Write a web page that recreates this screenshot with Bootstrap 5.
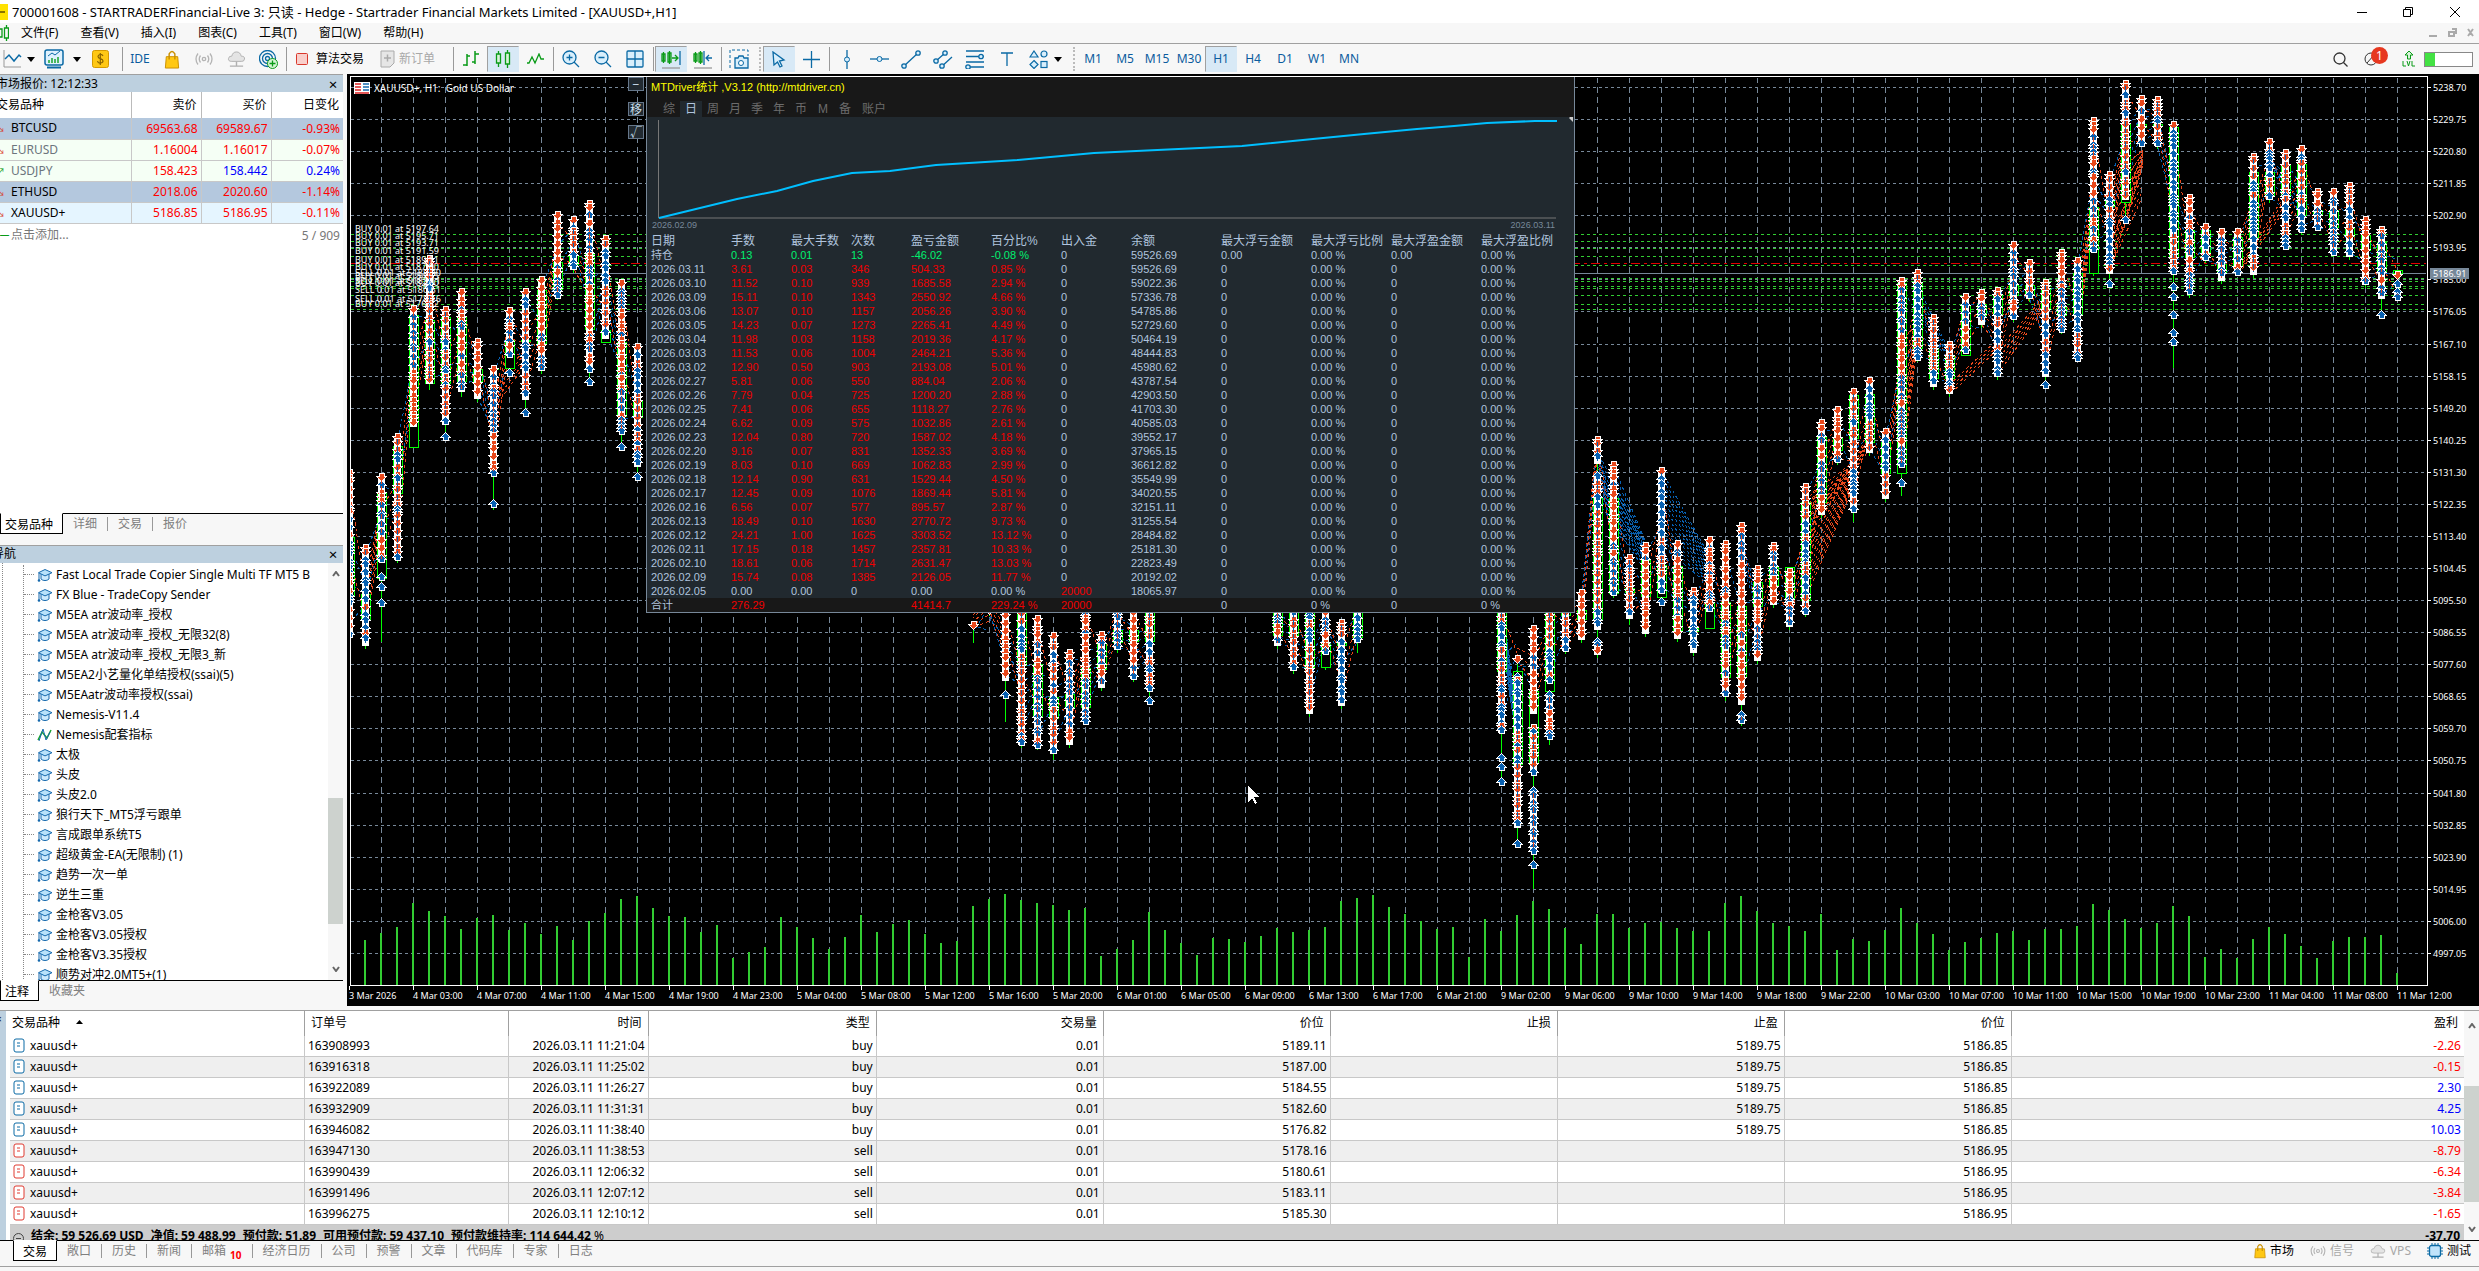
<!DOCTYPE html>
<html lang="zh-CN">
<head>
<meta charset="utf-8">
<meta name="viewport" content="width=device-width, initial-scale=1">
<title>XAUUSD+,H1</title>
<link rel="stylesheet" href="https://cdn.jsdelivr.net/npm/bootstrap@5.3.0/dist/css/bootstrap.min.css">
<script src="https://cdn.jsdelivr.net/npm/bootstrap@5.3.0/dist/js/bootstrap.bundle.min.js"></script>
<style>
:root{--ui:#f7f7f7;--ln:#a0a0a0;--hd:#bdd0df;--steel:#778899}
body{font:12px/16px "Noto Sans","Noto Sans CJK SC",sans-serif;color:#000;background:var(--ui);overflow:hidden}
button{font:inherit;border:0;background:none;padding:0;color:inherit;border-radius:0}
svg{display:block;flex:none}
th{font-weight:400}
.pull-4{margin-left:-4px}.pull-8{margin-left:-8px}
.titlebar{height:23px;background:#fff}
.titlebar h1{font-size:13px;line-height:20px;margin:0 0 0 4px}
.winbtns{gap:36px;padding-right:18px}
.app-ico{width:8px;height:16px;background:#ffe100}
.app-ico::after{content:"";display:block;width:5px;height:2px;margin-top:7px;background:#8a7400}
.menubar{height:21px;gap:22px;border-bottom:1px solid var(--ln)}
.menubar svg:first-child{margin-right:-10px}
.toolbar{height:30px;color:#0b5c9e}
.tb{width:32px;height:26px;display:flex;align-items:center;justify-content:center;border:1px solid transparent}
.tb.on{background:#d8e9f6;border-color:var(--ln) transparent transparent var(--ln)}
.tb-l{width:24px}.tb-c{width:14px}
.bar{width:4px;height:24px;background:linear-gradient(#999,#999) center/1px 100% no-repeat}
.bar-d{width:4px;height:24px;border-left:2px dotted #bbb}
.side{width:343px}
.phead{height:18px;background:var(--hd);border-top:1px solid var(--ln)}
.phead-2{margin-top:10px}
.xbtn{font-size:15px;line-height:16px;width:20px}
.watch{width:100%;table-layout:fixed;background:#fff}
.watch th{height:26px;padding:0 4px;border-right:1px solid #bbb;text-align:right}
.watch td{height:21px;padding:0 3px;border-right:1px solid #c8c8c8;border-bottom:1px solid #c8c8c8;text-align:right;color:#f00;line-height:19px}
.watch th:last-child,.watch td:last-child{border-right:0}
.watch th:first-child{text-align:left;padding:0}
.watch td:first-child{text-align:left;padding:0;color:#000;border-right-color:#c8c8c8}
.watch tfoot td{border:0;color:#777!important;height:24px}
.watch td.pos{color:#00f}
.tagarrow{display:inline-block;width:11px;font-size:9px}
.pane{background:#fff;min-height:0}
.tabrow{height:22px;border-top:1px solid #000;color:#808080}
.tabrow button{padding:0 10px;height:14px;line-height:14px;border-right:1px solid #999}
.tabrow button:last-of-type{border-right:0}
.tabrow .cur{height:21px;line-height:21px;margin-top:-1px;background:#fff;color:#000;border:1px solid #000;border-top-color:#fff;border-right-width:1px!important}
.tabs-side .cur{padding:0 9px 0 4px}
.tree{padding-top:2px;height:417px;overflow:hidden}
.tree li{height:20px;line-height:20px;white-space:nowrap;gap:3px}
.tree li::before{content:"";width:10px;border-top:1px dotted #888}
.trees{border-left:1px dotted #888;margin-left:2px}
.trees ul{border-left:1px dotted #888;margin:0 0 0 20px;padding:0}
.sbar{width:15px;background:var(--ui)}
.thumb{background:#cdd2ce}
.thumb-nav{height:126px;margin-top:221px}
.thumb-dock{height:116px}
.chart{background:#000;position:relative;overflow:hidden;margin-left:4px;min-width:0}
.chart>svg{position:absolute;left:0;top:0}
.chart text{font-family:"Noto Sans",sans-serif;font-size:9px;fill:#fff}
.ctitle{position:absolute;left:7px;top:6px;color:#fff;font-size:10px;line-height:16px;gap:4px;white-space:pre}
.cbtns{position:absolute;left:281px;top:3px;gap:9px}
.cbtns button{width:16px;height:14px;background:#222a31;border:1px solid #66778a;color:#cfe0f0;font-size:12px;line-height:11px}
.cbtns button:first-child{margin-bottom:2px}
.stat{position:absolute;left:299px;top:3px;width:929px;background:#21292f;border:1px solid var(--steel);border-top:0;font-family:"Liberation Sans","Noto Sans CJK SC",sans-serif;color:#b0c4de}
.stat-h{background:#181818;height:40px}
.stat-h h2{color:#ff0;font-size:11px;line-height:20px;margin:0;padding-left:4px;font-weight:400}
.stat-h nav{padding-left:11px;color:#6c6c6c}
.stat-h nav button{width:22px;height:16px;line-height:16px}
.stat-h nav button:last-child{width:36px}
.stat-h nav .sel{background:#21292f;color:#b0c4de}
.stat svg text{font-family:"Liberation Sans",sans-serif;font-size:9px;fill:var(--steel)}
.stat table{table-layout:fixed;width:100%;font-size:11px;line-height:14px}
.stat td,.stat th{height:14px;padding:0 0 0 4px;white-space:nowrap}
.stat th{font-size:12px}
.stat .r{color:#f00000}.stat .g{color:#00f070}
.stat tfoot{background:#181818}
.dock{border-top:1px solid var(--ln);margin-top:4px;background:#fff}
.strip{width:6px;background:var(--hd);font-size:10px;overflow:hidden}
.orders{table-layout:fixed;width:100%}
.orders th{height:25px;padding:0 6px;text-align:right;border-right:1px solid #a0a0a0}
.orders td{height:21px;line-height:20px;padding:0 3px;text-align:right;border-right:1px solid #c8c8c8;border-bottom:1px solid #c8c8c8;white-space:nowrap}
.orders tr>:nth-child(-n+2){text-align:left}
.orders tr>:nth-child(n+10){border-right:0}
.orders tbody tr:nth-child(even){background:#efefef}
.orders svg{display:inline-block;vertical-align:-3px;margin:0 5px 0 0}
.orders th .sortmark{vertical-align:3px;margin-left:16px}
.summary{height:15px;overflow:hidden;background:#cdcdcd;font-weight:700;line-height:22px;padding:0 4px 0 3px;gap:7px}
.dtabs{background:var(--ui);height:27px;border-bottom:1px solid var(--ln);padding-left:5px;padding-bottom:5px}
.dtabs .cur{padding:0 9px}
.mini{color:#f00;font-size:10px;position:relative;top:4px;font-weight:700}
.foot{height:4px;background:var(--ui);gap:78px;padding-right:131px}
.foot i{width:1px;background:#999}
.mutedtxt{color:#a8a8a8}
.neg{color:#f00}.pos{color:#00f}
.tools-end{padding-right:6px}
.lvlbox{width:49px;height:15px;border:1px solid #888;background:linear-gradient(90deg,#43e143 10px,#fff 10px)}
.badge-n{position:absolute;left:7px;top:-5px;width:17px;height:17px;border-radius:50%;background:#e73820;color:#fff;text-align:center;line-height:17px;font-size:12px}
</style>
</head>
<body class="d-flex flex-column vh-100">
<svg width="0" height="0" class="position-absolute">
<defs>
<symbol id="cap" viewBox="0 0 16 14"><path d="M4 6v5c2 2 6 2 8 0V6" fill="#cdeafd" stroke="#1669ad"/><path d="M8 1.500l7 3.200-7 3.200L1.500 4.700z" fill="#b8e2fb" stroke="#1669ad"/><path d="M2 5v7" stroke="#1669ad" fill="none"/><circle cx="2" cy="12.500" r="1.300" fill="#1669ad"/></symbol>
<symbol id="caret" viewBox="0 0 8 5"><path d="M0 0h8L4 5z" fill="#000"/></symbol>
<symbol id="bag" viewBox="0 0 16 20"><path d="M2 7h12l1 12H1z" fill="#ffc814" stroke="#c98f00"/><path d="M5 10V4q3-5 6 0v6" fill="none" stroke="#c98f00" stroke-width="1.500"/></symbol>
<symbol id="sig" viewBox="0 0 18 14"><g fill="none" stroke="#b4b4b4" stroke-width="1.300"><circle cx="9" cy="7" r="1.700"/><path d="M5.500 3.500q-2.500 3.500 0 7M12.500 3.500q2.500 3.500 0 7M3 1.500q-4 5.500 0 11M15 1.500q4 5.500 0 11"/></g></symbol>
<symbol id="cloud" viewBox="0 0 20 18"><path d="M5 11q-4 0-3.500-3T5 5.500Q6 1 10 1t5 4.500q4 0 3.500 3T15 11z" fill="#e4e4e4" stroke="#b0b0b0"/><path d="M10 11v5M3 16h14" stroke="#b0b0b0" stroke-width="1.500"/></symbol>
<symbol id="doc" viewBox="0 0 12 15"><rect x="1" y="1" width="10" height="13" rx="2" fill="#fff" stroke="currentColor"/><path d="M4 5h3M4 8h3" stroke="currentColor"/></symbol>
<symbol id="up" viewBox="0 0 8 6"><path d="M1 5l3-4 3 4" fill="none" stroke="#666" stroke-width="2"/></symbol>
<symbol id="dn" viewBox="0 0 8 6"><path d="M1 1l3 4 3-4" fill="none" stroke="#666" stroke-width="2"/></symbol>
</defs>
</svg>

<header class="titlebar d-flex align-items-center flex-shrink-0">
  <span class="app-ico"></span><h1 class="fw-normal">700001608 - STARTRADERFinancial-Live 3: 只读 - Hedge - Startrader Financial Markets Limited - [XAUUSD+,H1]</h1>
  <div class="winbtns ms-auto d-flex">
    <button aria-label="最小化"><svg width="10" height="12"><path d="M0 6.500h10" stroke="#000"/></svg></button>
    <button aria-label="还原"><svg width="10" height="12"><path d="M.5 3.500h7v7h-7zM2.500 3V1.500h7v7H8" fill="none" stroke="#000"/></svg></button>
    <button aria-label="关闭"><svg width="12" height="12"><path d="M1 1l10 10M11 1L1 11" stroke="#000"/></svg></button>
  </div>
</header>
<nav class="menubar d-flex align-items-center flex-shrink-0">
  <svg width="9" height="18" viewBox="0 0 9 18"><path d="M-1 5h3v8h-3M4.500 4h4v10h-4zM6.500 1v3M6.500 14v3" fill="none" stroke="#0a9b18" stroke-width="1.300"/></svg>
  <button>文件(F)</button><button>查看(V)</button><button>插入(I)</button><button>图表(C)</button><button>工具(T)</button><button>窗口(W)</button><button>帮助(H)</button>
  <svg class="ms-auto me-1" width="46" height="10" viewBox="0 0 46 10"><g fill="none" stroke="#aaa" stroke-width="2"><path d="M0 8h8M20 4h5v4h-5zM23 1h4v5M39 1l5 7M44 1l-5 7"/></g></svg>
</nav>
<div class="toolbar d-flex align-items-center flex-shrink-0" role="toolbar">
  <button class="tb tb-l" aria-label="图表"><svg width="20" height="18" viewBox="0 0 20 18"><path d="M2 0v17h17" stroke="#999" fill="none"/><path d="M3 9l4-4 5 6 5-6 2 2" fill="none" stroke="#0b6aa5" stroke-width="1.500"/></svg></button>
  <button class="tb tb-c" aria-label="更多图表"><svg width="8" height="5"><use href="#caret"/></svg></button>
  <button class="tb" aria-label="模板"><svg width="20" height="20" viewBox="0 0 20 20"><rect x="1" y="1" width="18" height="15" rx="2" fill="#dff1fd" stroke="#0b6aa5" stroke-width="1.500"/><path d="M3 18.500h14" stroke="#0b6aa5" stroke-width="2"/><path d="M4 7l4-3 3 2 5-4" fill="none" stroke="#0b6aa5"/><path d="M5 14v-3M8 14V9M11 14v-4M14 14V8" stroke="#18a52c" stroke-width="1.500"/></svg></button>
  <button class="tb tb-c" aria-label="更多模板"><svg width="8" height="5"><use href="#caret"/></svg></button>
  <button class="tb me-1" aria-label="账户"><svg width="17" height="18" viewBox="0 0 17 18"><rect x=".5" y=".5" width="16" height="17" rx="2" fill="#ffc814" stroke="#d59a00"/><path d="M11 6q-1-2-3-1.500t-2 2 2.500 2.200T11 11t-2.500 2T5.500 11M8.300 3v12" fill="none" stroke="#8a6400" stroke-width="1.200"/></svg></button>
  <span class="bar"></span>
  <button class="tb">IDE</button>
  <button class="tb" aria-label="市场"><svg width="16" height="19"><use href="#bag"/></svg></button>
  <button class="tb" aria-label="信号"><svg width="18" height="14"><use href="#sig"/></svg></button>
  <button class="tb" aria-label="VPS"><svg width="19" height="17"><use href="#cloud"/></svg></button>
  <button class="tb" aria-label="网络"><svg width="19" height="19" viewBox="0 0 19 19"><g fill="none" stroke="#0b6aa5" stroke-width="1.300"><circle cx="8.500" cy="8.500" r="8"/><circle cx="8.500" cy="8.500" r="5"/><circle cx="8.500" cy="8.500" r="2"/></g><circle cx="13.500" cy="13.500" r="5" fill="#d6f5d6" stroke="#0a9b18"/><path d="M10.500 13.500h6M13.500 10.500v6" stroke="#0a9b18" stroke-width="1.300"/></svg></button>
  <span class="bar"></span>
  <button class="d-flex align-items-center text-black gap-2 ms-1 me-2 ps-1"><svg width="12" height="12"><rect x=".5" y=".5" width="11" height="11" rx="1" fill="#f9cfcb" stroke="#d9382c"/></svg>算法交易</button>
  <button class="d-flex align-items-center gap-1 mutedtxt ms-1 me-3 ps-1"><svg width="15" height="18" viewBox="0 0 15 18"><path d="M1 1h13v12l-4 4H1z" fill="#e6e6e6" stroke="#aaa"/><path d="M4 8h7M7.500 4.500v7" stroke="#aaa" stroke-width="1.500"/></svg>新订单</button>
  <span class="bar"></span>
  <button class="tb" aria-label="柱状图"><svg width="18" height="18" viewBox="0 0 18 18" fill="none" stroke="#0a9b18" stroke-width="1.500"><path d="M5 4v12M1 15h4M5 6h3M13 1v13M10 12h3M13 4h4"/></svg></button>
  <button class="tb on" aria-label="蜡烛图"><svg width="16" height="18" viewBox="0 0 16 18" fill="#d9f3da" stroke="#0a9b18" stroke-width="1.300"><path d="M1.500 4h4v9h-4zM3.500 1v3M3.500 13v4M10.500 3h4v11h-4zM12.500 0v3M12.500 14v4"/></svg></button>
  <button class="tb" aria-label="折线图"><svg width="18" height="12" viewBox="0 0 18 12" fill="none" stroke="#0a9b18" stroke-width="1.300"><path d="M1 10h2l3-6 3 6 4-9 2 5h3"/></svg></button>
  <span class="bar"></span>
  <button class="tb" aria-label="放大"><svg width="18" height="18" viewBox="0 0 18 18" fill="#d9effc" stroke="#0b6aa5" stroke-width="1.300"><circle cx="7.500" cy="7.500" r="6.500"/><path d="M12 12l5 5M4.500 7.500h6M7.500 4.500v6"/></svg></button>
  <button class="tb" aria-label="缩小"><svg width="18" height="18" viewBox="0 0 18 18" fill="#d9effc" stroke="#0b6aa5" stroke-width="1.300"><circle cx="7.500" cy="7.500" r="6.500"/><path d="M12 12l5 5M4.500 7.500h6"/></svg></button>
  <button class="tb" aria-label="平铺"><svg width="18" height="18" viewBox="0 0 18 18" fill="#d9effc" stroke="#0b6aa5" stroke-width="1.300"><rect x="1" y="1" width="16" height="16" rx="1"/><path d="M9 1v16M1 9h16"/></svg></button>
  <span class="bar"></span>
  <button class="tb on" aria-label="自动滚动"><svg width="20" height="20" viewBox="0 0 20 20" fill="none" stroke="#0a9b18" stroke-width="1.300"><path d="M1 5h3v7H1zM2.500 3v11M7 4h3v9H7zM8.500 2v13M11 9h6M14 6l3 3-3 3"/><path d="M19 2v14" stroke="#0b6aa5"/><path d="M1 19h18" stroke="#999"/></svg></button>
  <button class="tb" aria-label="图表平移"><svg width="20" height="20" viewBox="0 0 20 20" fill="none" stroke="#0a9b18" stroke-width="1.300"><path d="M1 5h3v7H1zM2.500 3v11M6 4h3v9H6zM7.500 2v13"/><path d="M11 2v14M19 9h-6M16 6l-3 3 3 3" stroke="#0b6aa5"/><path d="M1 19h18" stroke="#999"/></svg></button>
  <span class="bar"></span>
  <button class="tb" aria-label="截图"><svg width="20" height="20" viewBox="0 0 20 20"><path d="M1 19V1h18v6" fill="none" stroke="#0b6aa5" stroke-dasharray="3 2"/><path d="M6 9h3l1-2h4l1 2h4v10H6z" fill="#d9effc" stroke="#0b6aa5" stroke-width="1.300"/><circle cx="12" cy="14" r="2.500" fill="#fff" stroke="#0b6aa5"/></svg></button>
  <span class="bar-d ms-1"></span>
  <button class="tb on" aria-label="光标"><svg width="14" height="17" viewBox="0 0 14 17"><path d="M1 1l11 8-4.500 1 2.500 5-2 1-2.500-5L2 14z" fill="#d9effc" stroke="#0b6aa5" stroke-width="1.300"/></svg></button>
  <button class="tb" aria-label="十字线"><svg width="17" height="17" viewBox="0 0 17 17"><path d="M8.500 0v17M0 8.500h17" stroke="#0b6aa5" stroke-width="1.300"/></svg></button>
  <span class="bar"></span>
  <button class="tb" aria-label="垂直线"><svg width="8" height="19" viewBox="0 0 8 19"><path d="M4 0v19" stroke="#0b6aa5" stroke-width="1.300"/><circle cx="4" cy="9.500" r="2.500" fill="#d9effc" stroke="#0b6aa5"/></svg></button>
  <button class="tb" aria-label="水平线"><svg width="19" height="8" viewBox="0 0 19 8"><path d="M0 4h19" stroke="#0b6aa5" stroke-width="1.300"/><circle cx="9.500" cy="4" r="2.500" fill="#d9effc" stroke="#0b6aa5"/></svg></button>
  <button class="tb" aria-label="趋势线"><svg width="20" height="19" viewBox="0 0 20 19" fill="#d9effc" stroke="#0b6aa5" stroke-width="1.300"><path d="M3 16L17 3"/><circle cx="3" cy="16" r="2.200"/><circle cx="17" cy="3" r="2.200"/></svg></button>
  <button class="tb" aria-label="通道"><svg width="20" height="19" viewBox="0 0 20 19" fill="#d9effc" stroke="#0b6aa5" stroke-width="1.300"><path d="M3 11L12 3M7 18L19 7"/><circle cx="3" cy="11" r="2.200"/><circle cx="12" cy="3" r="2.200"/><circle cx="9" cy="16" r="2.200"/></svg></button>
  <button class="tb" aria-label="斐波那契"><svg width="20" height="19" viewBox="0 0 20 19" fill="#d9effc" stroke="#0b6aa5" stroke-width="1.300"><path d="M1 1h18M1 6.500h18M1 12h18M1 17h18"/><circle cx="16" cy="6.500" r="2.200"/><circle cx="3" cy="17" r="2.200"/></svg></button>
  <button class="tb" aria-label="文本"><svg width="14" height="14" viewBox="0 0 14 14"><path d="M1 1h12M7 1v13" stroke="#0b6aa5" stroke-width="1.300"/></svg></button>
  <button class="tb" aria-label="图形"><svg width="20" height="19" viewBox="0 0 20 19" fill="#d9effc" stroke="#0b6aa5" stroke-width="1.200"><path d="M5 1l4 6H1z"/><circle cx="15" cy="4" r="3"/><path d="M5 10.500l4 4-4 4-4-4z"/><rect x="12" y="11.500" width="6" height="6"/></svg></button>
  <button class="tb tb-c pull-4" aria-label="更多图形"><svg width="8" height="5"><use href="#caret"/></svg></button>
  <span class="bar-d ms-2"></span>
  <button class="tb">M1</button><button class="tb">M5</button><button class="tb">M15</button><button class="tb">M30</button><button class="tb on">H1</button><button class="tb">H4</button><button class="tb">D1</button><button class="tb">W1</button><button class="tb">MN</button>
  <div class="tools-end ms-auto d-flex align-items-center gap-3">
    <button aria-label="搜索"><svg width="15" height="15" viewBox="0 0 15 15" fill="none" stroke="#333" stroke-width="1.300"><circle cx="6.500" cy="6.500" r="5.500"/><path d="M10.500 10.500l4 4"/></svg></button>
    <button aria-label="通知" class="position-relative me-2"><svg width="14" height="14" viewBox="0 0 14 14" fill="none" stroke="#333"><circle cx="7" cy="7" r="6"/><path d="M3 11l7-8"/></svg><span class="badge-n">1</span></button>
    <svg width="14" height="18" viewBox="0 0 14 18"><path d="M7 1l4 4H8.500v4h-3V5H3z" fill="#d9f3da" stroke="#0a9b18"/><path d="M1 11v5h3M5 11l1.500 5L8 11M10 11v5h3" fill="none" stroke="#0a9b18"/></svg>
    <span class="lvlbox pull-8"></span>
  </div>
</div>

<main class="d-flex flex-grow-1 overflow-hidden">
  <aside class="side d-flex flex-column flex-shrink-0">
    <div class="phead d-flex justify-content-between align-items-center overflow-hidden flex-shrink-0"><span class="pull-4">市场报价: 12:12:33</span><button class="xbtn" aria-label="关闭">×</button></div>
    <section class="pane flex-grow-1">
      <table class="watch" id="watch">
        <colgroup><col style="width:131px"><col style="width:70px"><col style="width:70px"><col></colgroup>
        <thead><tr><th><span class="d-block pull-4">交易品种</span></th><th>卖价</th><th>买价</th><th>日变化</th></tr></thead>
        <tbody></tbody>
        <tfoot><tr><td colspan="2"><span class="tagarrow" style="color:#0a9b18">━</span>点击添加...</td><td colspan="2">5 / 909</td></tr></tfoot>
      </table>
    </section>
    <div class="tabrow tabs-side d-flex align-items-center flex-shrink-0"><button class="cur align-self-start">交易品种</button><button>详细</button><button>交易</button><button>报价</button></div>
    <div class="phead phead-2 d-flex justify-content-between align-items-center overflow-hidden flex-shrink-0"><span class="pull-8">导航</span><button class="xbtn" aria-label="关闭">×</button></div>
    <div class="d-flex pane flex-shrink-0">
      <div class="trees tree flex-grow-1 overflow-hidden"><ul class="list-unstyled" id="nav"></ul></div>
      <div class="sbar d-flex flex-column align-items-center py-2"><svg width="8" height="6"><use href="#up"/></svg><span class="thumb thumb-nav w-100 mb-auto"></span><svg width="8" height="6"><use href="#dn"/></svg></div>
    </div>
    <div class="tabrow tabs-side d-flex align-items-center flex-shrink-0 mb-1"><button class="cur align-self-start">注释</button><button>收藏夹</button></div>
  </aside>

  <section class="chart flex-grow-1">
    <svg id="plot" width="2132" height="932" viewBox="347 74 2132 932" shape-rendering="crispEdges"></svg>
    <div class="ctitle d-flex align-items-center"><svg width="16" height="12" viewBox="0 0 16 12"><path fill="#fff" d="M0 0h16v12H0z"/><path d="M1 2h6M1 5h6M1 8h6M1 11h14" stroke="#d22" stroke-width="1.500"/><path d="M9 2h6M9 5h6M9 8h6" stroke="#1669ad" stroke-width="1.500"/></svg><span>XAUUSD+, H1:  Gold US Dollar</span></div>
    <div class="cbtns d-flex flex-column"><button>−</button><button>移</button><button>√</button></div>
    <div class="stat">
      <div class="stat-h"><h2>MTDriver统计 ,V3.12 (http://mtdriver.cn)</h2>
        <nav class="d-flex mt-1"><button>综</button><button class="sel">日</button><button>周</button><button>月</button><button>季</button><button>年</button><button>币</button><button>M</button><button>备</button><button>账户</button></nav></div>
      <svg width="927" height="117" viewBox="647 117 927 117"><path d="M658.500 120v98H1556" fill="none" stroke="#777"/><path d="M659 218L737 199 777 191 813 181 852 173 890 171 936 165 1018 160 1094 153 1242 146 1313 139 1364 134 1417 129 1454 126 1487 123 1535 121 1557 121" fill="none" stroke="#00bfff" stroke-width="2"/><text x="652" y="228">2026.02.09</text><text x="1555" y="228" text-anchor="end">2026.03.11</text><path d="M1573 114v8l-4-4z" fill="#ccc"/></svg>
      <table id="stat"><colgroup><col style="width:80px"><col style="width:60px"><col style="width:60px"><col style="width:60px"><col style="width:80px"><col style="width:70px"><col style="width:70px"><col style="width:90px"><col style="width:90px"><col style="width:80px"><col style="width:90px"><col></colgroup><thead></thead><tbody></tbody><tfoot></tfoot></table>
    </div>
  </section>
</main>

<section class="dock flex-shrink-0">
  <div class="d-flex">
    <div class="strip flex-shrink-0"><span class="pull-4">×</span></div>
    <div class="flex-grow-1 ms-1 overflow-hidden">
      <table class="orders" id="orders"><colgroup><col style="width:12%"><col style="width:8.300%"><col style="width:5.700%"><col style="width:9.300%"><col style="width:9.250%"><col style="width:9.250%"><col style="width:9.250%"><col style="width:9.250%"><col style="width:9.250%"><col></colgroup>
      <thead><tr><th><span class="pull-4">交易品种</span><svg width="7" height="4" class="sortmark"><path d="M0 4l3.500-4L7 4z"/></svg></th><th>订单号</th><th>时间</th><th>类型</th><th>交易量</th><th>价位</th><th>止损</th><th>止盈</th><th>价位</th><th>盈利</th></tr></thead><tbody></tbody></table>
      <div class="summary d-flex"><svg width="11" height="11" viewBox="0 0 11 11" class="mt-2"><circle cx="5.500" cy="5.500" r="5" fill="none" stroke="#444"/><path d="M3 5.500h5" stroke="#444"/></svg><span>结余: 59 526.69 USD</span><span>净值: 59 488.99</span><span>预付款: 51.89</span><span>可用预付款: 59 437.10</span><span>预付款维持率: 114 644.42 <span class="fw-normal">%</span></span><span class="ms-auto">-37.70</span></div>
    </div>
    <div class="sbar d-flex flex-column align-items-center py-2 flex-shrink-0"><svg width="8" height="6" class="mt-1"><use href="#up"/></svg><span class="thumb thumb-dock w-100 mt-auto mb-4"></span><svg width="8" height="6"><use href="#dn"/></svg></div>
  </div>
  <div class="dtabs tabrow d-flex align-items-center">
    <button class="cur align-self-start ms-2">交易</button><button>敞口</button><button>历史</button><button>新闻</button><button>邮箱<span class="mini ms-1">10</span></button><button>经济日历</button><button>公司</button><button>预警</button><button>文章</button><button>代码库</button><button>专家</button><button>日志</button>
    <div class="ms-auto d-flex gap-3 pe-2 text-black">
      <a class="d-flex align-items-center gap-1 text-decoration-none text-black" href="#"><svg width="12" height="16"><use href="#bag"/></svg>市场</a>
      <a class="d-flex align-items-center gap-1 text-decoration-none mutedtxt" href="#"><svg width="16" height="12"><use href="#sig"/></svg>信号</a>
      <a class="d-flex align-items-center gap-1 text-decoration-none mutedtxt" href="#"><svg width="16" height="15"><use href="#cloud"/></svg>VPS</a>
      <a class="d-flex align-items-center gap-1 text-decoration-none text-black" href="#"><svg width="16" height="16" viewBox="0 0 16 16"><path d="M5 0v16M8 0v16M11 0v16M0 5h16M0 8h16M0 11h16" stroke="#0b6aa5"/><rect x="2.500" y="2.500" width="11" height="11" rx="2" fill="#bfe3fb" stroke="#0b6aa5" stroke-width="1.300"/></svg>测试</a>
    </div>
  </div>
  <div class="foot d-flex justify-content-end pt-1"><i></i><i></i><i></i><i></i><i></i><i></i><i></i><i></i></div>
</section>

<script>
const $=s=>document.querySelector(s);
$('#watch tbody').innerHTML=[
 ['BTCUSD','69563.68','69589.67','-0.93%','#b4c8de',0],['EURUSD','1.16004','1.16017','-0.07%','#f5fff5',0],
 ['USDJPY','158.423','158.442','0.24%','#f5fff5',1],['ETHUSD','2018.06','2020.60','-1.14%','#b4c8de',0],['XAUUSD+','5186.85','5186.95','-0.11%','#e5f5ff',0]
].map(r=>`<tr style="background:${r[4]}"><td${r[4]=='#f5fff5'?' class="text-secondary"':''}><span class="tagarrow" style="color:${r[5]?'#0a9b18':'#d9382c'}"><span class="pull-4">${r[5]?'↗':'↘'}</span></span>${r[0]}</td><td>${r[1]}</td><td${r[5]?' class="pos"':''}>${r[2]}</td><td${r[5]?' class="pos"':''}>${r[3]}</td></tr>`).join('');
$('#nav').innerHTML=['Fast Local Trade Copier Single Multi TF MT5 B','FX Blue - TradeCopy Sender','M5EA atr波动率_授权','M5EA atr波动率_授权_无限32(8)','M5EA atr波动率_授权_无限3_新','M5EA2小艺量化单结授权(ssai)(5)','M5EAatr波动率授权(ssai)','Nemesis-V11.4','Nemesis配套指标','太极','头皮','头皮2.0','狼行天下_MT5浮亏跟单','言成跟单系统T5','超级黄金-EA(无限制) (1)','趋势一次一单','逆生三重','金枪客V3.05','金枪客V3.05授权','金枪客V3.35授权','顺势对冲2.0MT5+(1)']
.map((t,i)=>`<li class="d-flex align-items-center">${i==8?'<svg width="16" height="14" viewBox="0 0 16 14"><path d="M1 12l4-8 5 6 4-8" fill="none" stroke="#18a52c" stroke-width="1.500"/><path d="M2 13l4-12 3 11 4-8" fill="none" stroke="#1669ad"/></svg>':'<svg width="16" height="14"><use href="#cap"/></svg>'}<span>${t}</span></li>`).join('');

const days=`2026.03.11 3.61 0.03 346 504.33 0.85 59526.69
2026.03.10 11.52 0.10 939 1685.58 2.94 59022.36
2026.03.09 15.11 0.10 1343 2550.92 4.66 57336.78
2026.03.06 13.07 0.10 1157 2056.26 3.90 54785.86
2026.03.05 14.23 0.07 1273 2265.41 4.49 52729.60
2026.03.04 11.98 0.03 1158 2019.36 4.17 50464.19
2026.03.03 11.53 0.06 1004 2464.21 5.36 48444.83
2026.03.02 12.90 0.50 903 2193.08 5.01 45980.62
2026.02.27 5.81 0.06 550 884.04 2.06 43787.54
2026.02.26 7.79 0.04 725 1200.20 2.88 42903.50
2026.02.25 7.41 0.06 655 1118.27 2.76 41703.30
2026.02.24 6.62 0.09 575 1032.86 2.61 40585.03
2026.02.23 12.04 0.80 720 1587.02 4.18 39552.17
2026.02.20 9.16 0.07 831 1352.33 3.69 37965.15
2026.02.19 8.03 0.10 669 1062.83 2.99 36612.82
2026.02.18 12.14 0.90 631 1529.44 4.50 35549.99
2026.02.17 12.45 0.09 1076 1869.44 5.81 34020.55
2026.02.16 6.56 0.07 577 895.57 2.87 32151.11
2026.02.13 18.49 0.10 1630 2770.72 9.73 31255.54
2026.02.12 24.21 1.00 1625 3303.52 13.12 28484.82
2026.02.11 17.15 0.18 1457 2357.81 10.33 25181.30
2026.02.10 18.61 0.06 1714 2631.47 13.03 22823.49
2026.02.09 15.74 0.08 1385 2126.05 11.77 20192.02`.split('\n').map(l=>l.split(' '));
const cells=(a,cls,from,to)=>a.map((v,i)=>`<td${cls&&i>=from&&i<=to?` class="${cls}"`:''}>${v}</td>`).join('');
$('#stat thead').innerHTML='<tr>'+['日期','手数','最大手数','次数','盈亏金额','百分比%','出入金','余额','最大浮亏金额','最大浮亏比例','最大浮盈金额','最大浮盈比例'].map(t=>`<th>${t}</th>`).join('')+'</tr>';
$('#stat tbody').innerHTML='<tr>'+cells(['持仓','0.13','0.01','13','-46.02','-0.08 %','0','59526.69','0.00','0.00 %','0.00','0.00 %'],'g',1,5)+'</tr>'
+days.map(d=>'<tr>'+cells([d[0],d[1],d[2],d[3],d[4],d[5]+' %','0',d[6],'0','0.00 %','0','0.00 %'],'r',1,5)+'</tr>').join('')
+'<tr>'+cells(['2026.02.05','0.00','0.00','0','0.00','0.00 %','20000','18065.97','0','0.00 %','0','0.00 %'],'r',6,6)+'</tr>';
$('#stat tfoot').innerHTML='<tr>'+cells(['合计','276.29','','','41414.7','229.24 %','20000','','0','0 %','0','0 %'],'r',1,6)+'</tr>';

$('#orders tbody').innerHTML=[['163908993','11:21:04','5189.11','-2.26'],['163916318','11:25:02','5187.00','-0.15'],['163922089','11:26:27','5184.55','2.30'],['163932909','11:31:31','5182.60','4.25'],['163946082','11:38:40','5176.82','10.03'],['163947130','11:38:53','5178.16','-8.79'],['163990439','12:06:32','5180.61','-6.34'],['163991496','12:07:12','5183.11','-3.84'],['163996275','12:10:12','5185.30','-1.65']]
.map((r,i)=>{const b=i<5;return `<tr><td><svg width="12" height="15" style="color:${b?'#0b6aa5':'#e03a30'}"><use href="#doc"/></svg>xauusd+</td><td>${r[0]}</td><td>2026.03.11 ${r[1]}</td><td>${b?'buy':'sell'}</td><td>0.01</td><td>${r[2]}</td><td></td><td>${b?'5189.75':''}</td><td>${b?'5186.85':'5186.95'}</td><td class="${r[3]<0?'neg':'pos'}">${r[3]}</td></tr>`}).join('');

// chart: hourly candles every 16 units
let seed=7;const rnd=()=>(seed=(seed*16807)%2147483647)/2147483647;
const X=i=>349+16*i,PY=p=>87+(5238.70-p)/8.95*32.07;
let h='<defs><clipPath id="pc"><path d="M351 78H2426V985H351z"/></clipPath></defs><g clip-path="url(#pc)">';
for(let x=381;x<2427;x+=32)h+=`<path d="M${x}.5 77V985" stroke="#778899" stroke-dasharray="6 4"/>`;
for(let k=0;k<28;k++){const y=Math.round(87+k*32.07)+.5;h+=`<path d="M351 ${y}H2426" stroke="#778899" stroke-dasharray="3 3"/>`}
[5197.64,5195.71,5193.71,5191.59,5189.11,5185.30,5184.55,5183.11,5182.60,5180.61,5178.16,5176.82].forEach(p=>h+=`<path d="M351 ${Math.round(PY(p))+.5}H2426" stroke="#32cd32" stroke-dasharray="3 3"/>`);
h+='<path d="M351 263.500H2426" stroke="#e00000" stroke-dasharray="9 4 3 4"/><path d="M351 273.500H2426" stroke="#778899"/>';
const vol=[0,940,933,927,903,911,916,929,918,915,930,923,934,926,940,921,913,899,896,908,916,917,932,925,958,952,947,917,927,938,949,937,915,932,924,920,934,943,941,906,899,894,900,903,905,910,908,956,949,940,912,930,943,955,938,939,942,936,928,932,930,927,901,898,895,907,914,921,929,927,957,919,931,915,901,909,928,944,914,914,928,923,922,928,931,931,903,896,911,923,926,931,914,950,939,941,930,908,923,934,950,942,938,933,931,940,929,929,926,904,910,919,928,923,906,916,957,949,958,939,927,934,946,958,941,937,937,935,973];
vol.forEach((y,i)=>{if(i)h+=`<path d="M${X(i)} ${y}V985" stroke="#32cd32" stroke-width="2"/>`});
// i: [body top, body bottom, wick end, stacks of trade marks as start/end pairs]
const C={0:[537,595,0,469,640],1:[594,619,0,544,649],2:[493,578,642,473,565,573,580,583,590,599,608],3:[446,493,0,433,563],4:[315,447,0,305,430],5:[320,383,390,255,387],6:[317,383,0,306,428,433,440],7:[317,381,397,288,395],8:[369,381,0,338,402],9:[368,369,510,365,477,500,507],10:[340,368,0,307,359,369,376],11:[340,341,0,288,403,409,417],12:[290,343,0,276,374],13:[262,289,0,211,300],14:[255,264,0,216,273],15:[254,329,0,200,373,378,385],16:[330,342,0,235,342],17:[342,416,0,279,435,443,449],18:[400,417,0,343,470,473,479],
39:[600,605,643,621,629],40:[600,605,0,606,616],41:[600,605,722,600,684,691,699],42:[600,665,0,600,748],43:[664,717,0,615,750],44:[697,718,760,632,757],45:[694,707,0,649,748],46:[668,707,0,600,725],47:[643,669,0,631,691],48:[630,642,0,600,653],49:[630,641,0,600,682],50:[600,641,0,600,693,697,705],
58:[600,635,0,600,649],59:[600,635,0,600,674],60:[600,667,0,600,717],61:[644,667,670,600,657],62:[643,645,0,619,709],63:[600,637,653,600,646],
72:[600,671,786,600,736,754,761,763,771,778,786],73:[671,764,845,655,661,673,831,840,846],74:[691,763,889,625,717,724,776,787,855,861,870],75:[600,691,745,600,685,691,740],76:[600,615,0,600,654],77:[610,619,0,589,643],78:[498,619,0,436,467,472,633,638,658],79:[498,593,0,461,598],80:[588,592,625,554,622],81:[560,596,0,542,637],82:[565,597,0,467,596,598,604],83:[566,630,0,540,642],84:[628,631,0,587,656],85:[602,628,0,536,615],86:[602,677,701,540,699],87:[606,677,0,522,708,711,726],88:[582,606,0,565,664],89:[567,585,0,542,608],90:[567,599,0,568,630],91:[502,600,0,483,617],92:[437,502,0,419,518],93:[438,450,0,406,465],94:[395,438,522,388,514],95:[394,442,0,377,456],96:[442,473,0,428,502],97:[283,473,496,277,469,479,489],98:[282,348,0,269,362],99:[348,378,0,314,390],100:[355,378,0,341,397],101:[305,355,0,293,355],102:[304,315,0,289,328],103:[294,315,0,287,380],104:[285,295,0,241,322],105:[285,295,0,259,302],106:[288,308,0,279,380,381,388],107:[307,315,0,249,334],108:[273,315,0,257,362],109:[207,273,276,117,255],110:[201,206,0,171,277,280,286],111:[123,202,0,80,203,216,223],112:[124,127,0,95,147],113:[124,126,0,96,149],114:[127,257,368,121,277,283,290,293,299,311,322,329,336,338,345],115:[230,257,298,194,295],116:[230,252,0,223,263],117:[264,273,0,228,284],118:[237,266,0,228,276],119:[172,237,0,153,278],120:[172,195,0,138,203],121:[164,196,0,149,250],122:[164,215,0,145,235],123:[210,214,0,188,231],124:[210,227,0,188,257],125:[227,236,0,182,260],126:[235,250,0,216,288],127:[242,271,0,226,302,311,317],128:[270,273,0,271,278,280,286,288,301]};
const RED='#e8481c',BLU='#0860b0';
const fan=(c,x1,a1,b1,x2,a2,b2,n)=>{for(let k=0;k<n;k++){const t=n>1?k/(n-1):0;h+=`<path d="M${x1} ${a1+(b1-a1)*t}L${x2} ${a2+(b2-a2)*t}" stroke="${c}" stroke-dasharray="3 3" stroke-dashoffset="${k%6}"/>`}};
// links between entry and exit of neighbouring bars
Object.keys(C).map(Number).forEach(i=>{const a=C[i],b=C[i+1];if(!b)return;
 const up=b[3]<a[3],n=3+Math.floor(rnd()*3),m=(a[3]+a[4])/2,q=(b[3]+b[4])/2;
 fan(up?RED:BLU,X(i),m-10,m+(a[4]-m)*.8,X(i+1),q-15,q+10,n);
 fan(up?BLU:RED,X(i),a[3]+12,m,X(i+1),q-5,q+20,2)});
fan(RED,1805,500,600,1853,462,488,16);fan(RED,1821,500,515,1869,440,450,5);fan(RED,1901,340,480,1917,325,345,9);fan(RED,1949,385,395,1997,340,350,4);fan(RED,1997,350,375,2045,296,308,6);
fan(RED,2077,300,345,2093,207,215,10);fan(RED,2109,205,270,2141,170,200,6);fan(RED,2109,250,275,2143,150,165,4);fan(RED,2125,165,225,2143,150,162,5);fan(RED,2109,180,272,2143,150,162,5);fan(RED,2237,270,276,2285,195,210,4);
fan(BLU,1597,450,500,1645,545,570,10);fan(BLU,1613,465,530,1645,540,560,10);fan(BLU,1661,470,545,1709,555,585,14);fan(BLU,1501,590,640,1517,720,740,12);fan(BLU,1917,285,320,1949,350,360,6);fan(BLU,2269,158,165,2301,190,215,5);fan(BLU,1741,540,560,1757,590,610,5);fan(RED,493,385,410,525,350,365,5);
for(const k in C){const[bt,bb,w,...s]=C[k],x=X(+k);
 h+=`<path d="M${x}.5 ${s[0]}V${w||s[s.length-1]}" stroke="#0f0"/><rect x="${x-4}.5" y="${bt}.5" width="9" height="${bb-bt}" stroke="#0f0" fill="#000"/>`;
 for(let j=0;j<s.length;j+=2){const a=s[j],b=s[j+1];
  if(b-a>12)h+=`<path d="M${x}.5 ${a+3}V${b-3}" stroke="#fff" stroke-width="7"/>`;
  let y=a+4,last=rnd()<.5;
  do{ if(rnd()<.25)last=!last; const d=j==0&&y<a+10?1:y>b-8?0:last;
   h+=d?`<path d="M${x+.5} ${y+4}l4-4h-2v-3h-4v3h-2z" fill="${RED}" stroke="#fff" stroke-width="2" paint-order="stroke"/>`:`<path d="M${x+.5} ${y-4}l4 4h-2v3h-4v-3h-2z" fill="${BLU}" stroke="#fff" stroke-width="2" paint-order="stroke"/>`;
   y+=[3,4,5,8,8][Math.floor(rnd()*5)];
  }while(y<b-3);
  if(b-a>12)h+=`<path d="M${x}.5 ${a+6}V${b-6}" stroke="${rnd()<.5?RED:BLU}" stroke-dasharray="5 2"/>`;
 }}
h+='</g>';
h+='<path d="M350.500 985V76.500H2427.500V985.500H350" fill="none" stroke="#fff"/>';
[['BUY',5197.64],['BUY',5195.71],['BUY',5193.71],['BUY',5191.59],['BUY',5189.11],['BUY',5187.00],['BUY',5184.55],['BUY',5182.60],['SELL',5185.30],['SELL',5183.11],['SELL',5180.61],['SELL',5178.16],['BUY',5176.82]].forEach(o=>h+=`<text x="355" y="${Math.round(PY(o[1]))-2}">${o[0]} 0.01 at ${o[1].toFixed(2)}</text>`);
for(let k=0;k<28;k++){const y=Math.round(87+k*32.07);h+=`<path d="M2427 ${y}.5h4" stroke="#fff"/><text x="2433" y="${y+4}">${(5238.70-k*8.95).toFixed(2)}</text>`}
h+='<rect x="2430" y="268" width="39" height="11" fill="#778899"/><text x="2433" y="277">5186.91</text>';
const T=[['3 Mar 2026'],['4 Mar','03','07','11','15','19','23'],['5 Mar','04','08','12','16','20'],['6 Mar','01','05','09','13','17','21'],['9 Mar','02','06','10','14','18','22'],['10 Mar','03','07','11','15','19','23'],['11 Mar','04','08','12']].flatMap(([d,...t])=>t.length?t.map(v=>`${d} ${v}:00`):[d]);
T.forEach((t,i)=>h+=`<path d="M${X(i*4)}.5 986v4" stroke="#fff"/><text x="${X(i*4)}" y="999">${t}</text>`);
h+='<path d="M1248 785v17l4-4 3 6 2-1-3-6h5z" fill="#fff"/>';
$('#plot').innerHTML=h;
</script>
</body>
</html>
